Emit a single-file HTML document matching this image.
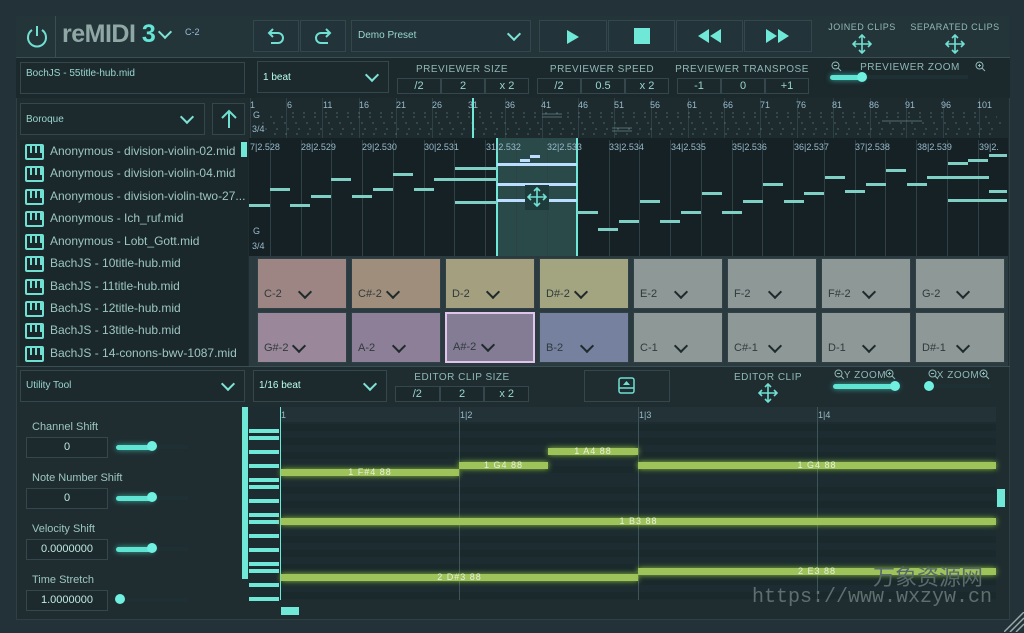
<!DOCTYPE html>
<html><head><meta charset="utf-8"><style>
*{box-sizing:border-box;margin:0;padding:0}
body{width:1024px;height:633px;background:#233238;font-family:"Liberation Sans",sans-serif;color:#8ccfc6;position:relative;overflow:hidden;font-size:11px}
.a{position:absolute}
.box{position:absolute;border:1px solid #34474c;background:#1c2a2e}
.t{position:absolute;white-space:nowrap}
.lbl{position:absolute;font-size:10px;color:#8fb9b6;letter-spacing:.5px;white-space:nowrap;transform:translateX(-50%)}
.btns{position:absolute;display:flex;height:16px}
.btns div{flex:1;border:1px solid #34474c;background:#1b292d;text-align:center;font-size:11px;line-height:14px;color:#9ad6ce}
.chev{position:absolute;width:10px;height:10px;border-right:2px solid #7ee3d6;border-bottom:2px solid #7ee3d6;transform:rotate(45deg)}
.pad{position:absolute;width:90px;height:51px;border:1px solid #2f4146}
.pad span{position:absolute;left:6px;bottom:8px;font-size:11px;color:#2f3a3c}
.pad i{position:absolute;left:42px;bottom:11px;width:10px;height:10px;border-right:2px solid #1f2a2c;border-bottom:2px solid #1f2a2c;transform:rotate(45deg)}
.fi{position:absolute;left:24px;height:20px;font-size:12px;color:#9cc6c1}
.fi b{position:absolute;left:1px;top:2px;width:19px;height:16px;border:2px solid #6fe0d2;border-radius:2px}
.fi b:before{content:"";position:absolute;left:3px;top:0;width:2px;height:7px;background:#6fe0d2;box-shadow:5px 0 #6fe0d2,10px 0 #6fe0d2}
.fi span{position:absolute;left:26px;top:2px;white-space:nowrap}
.pn{position:absolute;height:3px;background:#7fcfc5}
.vl{position:absolute;width:1px;background:#2e4145}
.ctl{position:absolute;left:32px;font-size:11px;color:#9cc6c1}
.vbox{position:absolute;left:26px;width:82px;height:21px;border:1px solid #34474c;background:#1c2a2e;text-align:center;line-height:19px;font-size:11px;color:#bfe9e3}
.sl{position:absolute;height:5px;border-radius:3px;background:#5fe3d3;box-shadow:0 0 6px #3fa89c}
.knob{position:absolute;width:12px;height:12px;border-radius:6px;background:#6ff0e0}
.note{position:absolute;height:7px;background:#9ec35a;box-shadow:0 0 6px #8fbf3f;font-size:9px;color:#e8f0d8;text-align:center;line-height:7px;letter-spacing:1px}
.key{position:absolute;left:249px;width:30px;height:4px;background:#6fe8d8}
.row{position:absolute;left:280px;width:716px;height:7px;background:#1a2a2c}
.mag{position:absolute}
</style></head><body>
<div class="a" style="left:16px;top:16px;width:994px;height:604px;background:#1f2d31;border:1px solid #2f4044"></div>
<div class="a" style="left:16px;top:16px;width:994px;height:42px;background:#24353a;border-bottom:1px solid #3a4f53"></div>
<div class="a" style="left:16px;top:16px;width:40px;height:42px;border-right:1px solid #3a4f53"></div>
<svg class="a" style="left:24px;top:24px" width="26" height="26" viewBox="0 0 26 26"><path d="M8 6 A9 9 0 1 0 18 6" fill="none" stroke="#6fe0d2" stroke-width="2"/><line x1="13" y1="2" x2="13" y2="12" stroke="#6fe0d2" stroke-width="2"/></svg>
<div class="t" style="left:62px;top:20px;font-size:25px;font-weight:bold;color:#8fa8a6;letter-spacing:-0.5px">reMIDI <span style="color:#63e6d6">3</span></div>
<div class="chev" style="left:160px;top:27px"></div>
<div class="t" style="left:185px;top:27px;font-size:9px;color:#9bd">C-2</div>
<div class="box" style="left:253px;top:20px;width:46px;height:32px;background:#22333a"></div>
<div class="box" style="left:300px;top:20px;width:46px;height:32px;background:#22333a"></div>
<svg class="a" style="left:266px;top:27px" width="20" height="18"><path d="M4 6 H12 A5 5 0 0 1 12 16 H5 M7 2 L3 6 L7 10" fill="none" stroke="#6fe0d2" stroke-width="2"/></svg>
<svg class="a" style="left:313px;top:27px" width="20" height="18"><path d="M16 6 H8 A5 5 0 0 0 8 16 H15 M13 2 L17 6 L13 10" fill="none" stroke="#6fe0d2" stroke-width="2"/></svg>
<div class="box" style="left:351px;top:20px;width:180px;height:32px;background:#22333a"></div>
<div class="t" style="left:358px;top:30px;font-size:10px;color:#9ad6ce">Demo Preset</div>
<div class="chev" style="left:509px;top:29px"></div>
<div class="box" style="left:539px;top:20px;width:68px;height:32px;background:#22333a"></div>
<div class="box" style="left:608px;top:20px;width:67px;height:32px;background:#22333a"></div>
<div class="box" style="left:676px;top:20px;width:67px;height:32px;background:#22333a"></div>
<div class="box" style="left:744px;top:20px;width:68px;height:32px;background:#22333a"></div>
<svg class="a" style="left:566px;top:29px" width="14" height="16"><path d="M1 1 L13 8 L1 15Z" fill="#6fe8d8"/></svg>
<div class="a" style="left:634px;top:28px;width:16px;height:16px;background:#6fe8d8"></div>
<svg class="a" style="left:698px;top:29px" width="24" height="14"><path d="M11 0 L0 7 L11 14Z M23 0 L12 7 L23 14Z" fill="#6fe8d8"/></svg>
<svg class="a" style="left:766px;top:29px" width="24" height="14"><path d="M0 0 L11 7 L0 14Z M12 0 L23 7 L12 14Z" fill="#6fe8d8"/></svg>
<div class="lbl" style="left:862px;top:22px;font-size:9px">JOINED CLIPS</div>
<div class="lbl" style="left:955px;top:22px;font-size:9px">SEPARATED CLIPS</div>
<svg class="a" style="left:852px;top:34px" width="20" height="20" viewBox="0 0 20 20"><path d="M10 1V19M1 10H19M7 4L10 1L13 4M7 16L10 19L13 16M4 7L1 10L4 13M16 7L19 10L16 13" fill="none" stroke="#6fe0d2" stroke-width="1.6"/></svg>
<svg class="a" style="left:945px;top:34px" width="20" height="20" viewBox="0 0 20 20"><path d="M10 1V19M1 10H19M7 4L10 1L13 4M7 16L10 19L13 16M4 7L1 10L4 13M16 7L19 10L16 13" fill="none" stroke="#6fe0d2" stroke-width="1.6"/></svg>
<div class="a" style="left:16px;top:58px;width:994px;height:40px;background:#1b282c"></div>
<div class="box" style="left:20px;top:62px;width:225px;height:32px"></div>
<div class="t" style="left:26px;top:68px;font-size:10px;color:#9ad6ce">BochJS - 55title-hub.mid</div>
<div class="box" style="left:257px;top:61px;width:132px;height:32px"></div>
<div class="t" style="left:263px;top:72px;font-size:10px;color:#bfe">1 beat</div>
<div class="chev" style="left:367px;top:70px"></div>
<div class="lbl" style="left:462px;top:64px">PREVIEWER SIZE</div>
<div class="btns" style="left:397px;top:78px;width:132px"><div>/2</div><div>2</div><div>x 2</div></div>
<div class="lbl" style="left:602px;top:64px">PREVIEWER SPEED</div>
<div class="btns" style="left:537px;top:78px;width:132px"><div>/2</div><div>0.5</div><div>x 2</div></div>
<div class="lbl" style="left:742px;top:64px">PREVIEWER TRANSPOSE</div>
<div class="btns" style="left:677px;top:78px;width:132px"><div>-1</div><div>0</div><div>+1</div></div>
<div class="lbl" style="left:910px;top:62px">PREVIEWER ZOOM</div>
<svg class="mag" style="left:831px;top:61px" width="11" height="11"><circle cx="4.5" cy="4.5" r="3.5" fill="none" stroke="#8fb9b6"/><path d="M7 7L10 10M3 4.5H6" stroke="#8fb9b6"/></svg>
<svg class="mag" style="left:975px;top:61px" width="11" height="11"><circle cx="4.5" cy="4.5" r="3.5" fill="none" stroke="#8fb9b6"/><path d="M7 7L10 10M3 4.5H6M4.5 3V6" stroke="#8fb9b6"/></svg>
<div class="a" style="left:830px;top:75px;width:138px;height:4px;background:#1f3034"></div>
<div class="sl" style="left:830px;top:75px;width:34px"></div>
<div class="knob" style="left:857px;top:72px;width:10px;height:10px"></div>
<div class="box" style="left:20px;top:103px;width:185px;height:32px"></div>
<div class="t" style="left:26px;top:114px;font-size:10px;color:#9ad6ce">Boroque</div>
<div class="chev" style="left:182px;top:112px"></div>
<div class="box" style="left:212px;top:103px;width:33px;height:32px"></div>
<svg class="a" style="left:219px;top:109px" width="20" height="20"><path d="M10 19V2M3 9L10 2L17 9" fill="none" stroke="#6fe0d2" stroke-width="2"/></svg>
<div class="a" style="left:20px;top:140px;width:228px;height:226px;background:#1a272b"></div>
<div class="a" style="left:241px;top:142px;width:6px;height:15px;background:#6fe8d8"></div>
<div class="fi" style="top:142px"><b></b><span>Anonymous - division-violin-02.mid</span></div>
<div class="fi" style="top:164px"><b></b><span>Anonymous - division-violin-04.mid</span></div>
<div class="fi" style="top:187px"><b></b><span>Anonymous - division-violin-two-27...</span></div>
<div class="fi" style="top:209px"><b></b><span>Anonymous - Ich_ruf.mid</span></div>
<div class="fi" style="top:232px"><b></b><span>Anonymous - Lobt_Gott.mid</span></div>
<div class="fi" style="top:254px"><b></b><span>BachJS - 10title-hub.mid</span></div>
<div class="fi" style="top:277px"><b></b><span>BachJS - 11title-hub.mid</span></div>
<div class="fi" style="top:299px"><b></b><span>BachJS - 12title-hub.mid</span></div>
<div class="fi" style="top:321px"><b></b><span>BachJS - 13title-hub.mid</span></div>
<div class="fi" style="top:344px"><b></b><span>BachJS - 14-conons-bwv-1087.mid</span></div>
<div class="a" style="left:249px;top:98px;width:759px;height:40px;background:#1d2b2f"></div>
<div class="vl" style="left:250px;top:98px;height:40px"></div><div class="vl" style="left:286px;top:98px;height:40px"></div><div class="vl" style="left:322px;top:98px;height:40px"></div><div class="vl" style="left:359px;top:98px;height:40px"></div><div class="vl" style="left:396px;top:98px;height:40px"></div><div class="vl" style="left:432px;top:98px;height:40px"></div><div class="vl" style="left:505px;top:98px;height:40px"></div><div class="vl" style="left:542px;top:98px;height:40px"></div><div class="vl" style="left:578px;top:98px;height:40px"></div><div class="vl" style="left:614px;top:98px;height:40px"></div><div class="vl" style="left:651px;top:98px;height:40px"></div><div class="vl" style="left:688px;top:98px;height:40px"></div><div class="vl" style="left:724px;top:98px;height:40px"></div><div class="vl" style="left:760px;top:98px;height:40px"></div><div class="vl" style="left:797px;top:98px;height:40px"></div><div class="vl" style="left:833px;top:98px;height:40px"></div><div class="vl" style="left:870px;top:98px;height:40px"></div><div class="vl" style="left:906px;top:98px;height:40px"></div><div class="vl" style="left:943px;top:98px;height:40px"></div><div class="vl" style="left:979px;top:98px;height:40px"></div>
<div class="t" style="left:250px;top:100px;font-size:9px;color:#9bc">1</div>
<div class="t" style="left:287px;top:100px;font-size:9px;color:#9bc">6</div><div class="t" style="left:323px;top:100px;font-size:9px;color:#9bc">11</div><div class="t" style="left:359px;top:100px;font-size:9px;color:#9bc">16</div><div class="t" style="left:396px;top:100px;font-size:9px;color:#9bc">21</div><div class="t" style="left:432px;top:100px;font-size:9px;color:#9bc">26</div><div class="t" style="left:468px;top:100px;font-size:9px;color:#9bc">31</div><div class="t" style="left:505px;top:100px;font-size:9px;color:#9bc">36</div><div class="t" style="left:541px;top:100px;font-size:9px;color:#9bc">41</div><div class="t" style="left:578px;top:100px;font-size:9px;color:#9bc">46</div><div class="t" style="left:614px;top:100px;font-size:9px;color:#9bc">51</div><div class="t" style="left:650px;top:100px;font-size:9px;color:#9bc">56</div><div class="t" style="left:687px;top:100px;font-size:9px;color:#9bc">61</div><div class="t" style="left:723px;top:100px;font-size:9px;color:#9bc">66</div><div class="t" style="left:760px;top:100px;font-size:9px;color:#9bc">71</div><div class="t" style="left:796px;top:100px;font-size:9px;color:#9bc">76</div><div class="t" style="left:832px;top:100px;font-size:9px;color:#9bc">81</div><div class="t" style="left:869px;top:100px;font-size:9px;color:#9bc">86</div><div class="t" style="left:905px;top:100px;font-size:9px;color:#9bc">91</div><div class="t" style="left:941px;top:100px;font-size:9px;color:#9bc">96</div><div class="t" style="left:977px;top:100px;font-size:9px;color:#9bc">101</div>
<div class="t" style="left:253px;top:110px;font-size:9px;color:#9bc">G</div>
<div class="t" style="left:252px;top:124px;font-size:9px;color:#9bc">3/4</div>
<svg class="a" style="left:262px;top:108px" width="745" height="28" opacity="0.6"><g stroke="#6c8e8c" stroke-width="1" stroke-dasharray="2 9"><path d="M0 15H740M8 9H735M3 21H740M12 26H730M30 5H720"/></g><path d="M280 6H300M280 9H300M350 20H370M350 23H370M620 13H660M940 12H960" stroke="#7a9c9a"/></svg>
<div class="a" style="left:472px;top:98px;width:2px;height:40px;background:#6fe8d8"></div>
<div class="a" style="left:249px;top:138px;width:759px;height:118px;background:#152124"></div>
<div class="a" style="left:497px;top:138px;width:80px;height:118px;background:#2a4a4a"></div>
<div class="a" style="left:496px;top:138px;width:2px;height:118px;background:#6fe8d8"></div>
<div class="a" style="left:576px;top:138px;width:2px;height:118px;background:#6fe8d8"></div>
<div class="a" style="left:241px;top:142px;width:6px;height:15px;background:#6fe8d8"></div>
<div class="vl" style="left:270px;top:140px;height:116px"></div><div class="vl" style="left:301px;top:140px;height:116px"></div><div class="vl" style="left:331px;top:140px;height:116px"></div><div class="vl" style="left:362px;top:140px;height:116px"></div><div class="vl" style="left:393px;top:140px;height:116px"></div><div class="vl" style="left:424px;top:140px;height:116px"></div><div class="vl" style="left:454px;top:140px;height:116px"></div><div class="vl" style="left:485px;top:140px;height:116px"></div><div class="vl" style="left:516px;top:140px;height:116px"></div><div class="vl" style="left:547px;top:140px;height:116px"></div><div class="vl" style="left:609px;top:140px;height:116px"></div><div class="vl" style="left:639px;top:140px;height:116px"></div><div class="vl" style="left:670px;top:140px;height:116px"></div><div class="vl" style="left:701px;top:140px;height:116px"></div><div class="vl" style="left:732px;top:140px;height:116px"></div><div class="vl" style="left:762px;top:140px;height:116px"></div><div class="vl" style="left:793px;top:140px;height:116px"></div><div class="vl" style="left:824px;top:140px;height:116px"></div><div class="vl" style="left:855px;top:140px;height:116px"></div><div class="vl" style="left:885px;top:140px;height:116px"></div><div class="vl" style="left:916px;top:140px;height:116px"></div><div class="vl" style="left:947px;top:140px;height:116px"></div><div class="vl" style="left:978px;top:140px;height:116px"></div>
<div class="t" style="left:250px;top:142px;font-size:9px;color:#9bc">7|2.528</div>
<div class="t" style="left:301px;top:142px;font-size:9px;color:#9bc">28|2.529</div><div class="t" style="left:362px;top:142px;font-size:9px;color:#9bc">29|2.530</div><div class="t" style="left:424px;top:142px;font-size:9px;color:#9bc">30|2.531</div><div class="t" style="left:486px;top:142px;font-size:9px;color:#9bc">31|2.532</div><div class="t" style="left:547px;top:142px;font-size:9px;color:#9bc">32|2.533</div><div class="t" style="left:609px;top:142px;font-size:9px;color:#9bc">33|2.534</div><div class="t" style="left:671px;top:142px;font-size:9px;color:#9bc">34|2.535</div><div class="t" style="left:732px;top:142px;font-size:9px;color:#9bc">35|2.536</div><div class="t" style="left:794px;top:142px;font-size:9px;color:#9bc">36|2.537</div><div class="t" style="left:855px;top:142px;font-size:9px;color:#9bc">37|2.538</div><div class="t" style="left:917px;top:142px;font-size:9px;color:#9bc">38|2.539</div><div class="t" style="left:979px;top:142px;font-size:9px;color:#9bc">39|2.</div>
<div class="t" style="left:253px;top:226px;font-size:9px;color:#9bc">G</div>
<div class="t" style="left:252px;top:241px;font-size:9px;color:#9bc">3/4</div>
<div class="pn" style="left:249px;top:204px;width:21px"></div><div class="pn" style="left:270px;top:188px;width:20px"></div><div class="pn" style="left:290px;top:204px;width:20px"></div><div class="pn" style="left:311px;top:195px;width:20px"></div><div class="pn" style="left:331px;top:178px;width:20px"></div><div class="pn" style="left:352px;top:195px;width:20px"></div><div class="pn" style="left:373px;top:188px;width:20px"></div><div class="pn" style="left:393px;top:173px;width:20px"></div><div class="pn" style="left:414px;top:188px;width:20px"></div><div class="pn" style="left:434px;top:178px;width:63px"></div><div class="pn" style="left:455px;top:167px;width:42px"></div><div class="pn" style="left:455px;top:201px;width:42px"></div>
<div class="pn" style="left:497px;top:163px;width:80px;background:#bdf"></div><div class="pn" style="left:497px;top:183px;width:80px;background:#bdf"></div><div class="pn" style="left:497px;top:199px;width:80px;background:#bdf"></div><div class="pn" style="left:520px;top:159px;width:10px;background:#bdf"></div><div class="pn" style="left:530px;top:155px;width:10px;background:#bdf"></div>
<div class="a" style="left:525px;top:185px;width:24px;height:25px;background:#1f3a3a"></div>
<svg class="a" style="left:527px;top:187px" width="20" height="20" viewBox="0 0 20 20"><path d="M10 1V19M1 10H19M7 4L10 1L13 4M7 16L10 19L13 16M4 7L1 10L4 13M16 7L19 10L16 13" fill="none" stroke="#6fe0d2" stroke-width="1.6"/></svg>
<div class="pn" style="left:577px;top:211px;width:21px"></div><div class="pn" style="left:598px;top:228px;width:20px"></div><div class="pn" style="left:619px;top:220px;width:20px"></div><div class="pn" style="left:640px;top:200px;width:20px"></div><div class="pn" style="left:660px;top:220px;width:20px"></div><div class="pn" style="left:681px;top:211px;width:20px"></div><div class="pn" style="left:702px;top:192px;width:20px"></div><div class="pn" style="left:722px;top:211px;width:20px"></div><div class="pn" style="left:743px;top:200px;width:20px"></div><div class="pn" style="left:763px;top:183px;width:20px"></div><div class="pn" style="left:784px;top:200px;width:20px"></div><div class="pn" style="left:804px;top:192px;width:20px"></div><div class="pn" style="left:825px;top:176px;width:20px"></div><div class="pn" style="left:845px;top:190px;width:20px"></div><div class="pn" style="left:866px;top:183px;width:20px"></div><div class="pn" style="left:886px;top:169px;width:20px"></div><div class="pn" style="left:907px;top:183px;width:20px"></div><div class="pn" style="left:927px;top:176px;width:62px"></div><div class="pn" style="left:948px;top:162px;width:20px"></div><div class="pn" style="left:968px;top:159px;width:20px"></div><div class="pn" style="left:989px;top:154px;width:18px"></div><div class="pn" style="left:948px;top:199px;width:59px"></div><div class="pn" style="left:989px;top:190px;width:18px"></div>
<div class="a" style="left:249px;top:256px;width:759px;height:110px;background:#2a3a3e"></div>
<div class="pad" style="left:257px;top:258px;background:#9c8582"><span>C-2</span><i></i></div>
<div class="pad" style="left:351px;top:258px;background:#a08e7c"><span>C#-2</span><i style="left:36px"></i></div>
<div class="pad" style="left:445px;top:258px;background:#a49f7e"><span>D-2</span><i></i></div>
<div class="pad" style="left:539px;top:258px;background:#a3a580"><span>D#-2</span><i style="left:36px"></i></div>
<div class="pad" style="left:633px;top:258px;background:#8e9896"><span>E-2</span><i></i></div>
<div class="pad" style="left:727px;top:258px;background:#8e9896"><span>F-2</span><i></i></div>
<div class="pad" style="left:821px;top:258px;background:#8e9896"><span>F#-2</span><i></i></div>
<div class="pad" style="left:915px;top:258px;background:#8e9896"><span>G-2</span><i></i></div>
<div class="pad" style="left:257px;top:312px;background:#9a889a"><span>G#-2</span><i style="left:36px"></i></div>
<div class="pad" style="left:351px;top:312px;background:#8d7f97"><span>A-2</span><i></i></div>
<div class="pad" style="left:445px;top:312px;background:#847b95;border:2px solid #e0c4ec"><span>A#-2</span><i style="left:36px"></i></div>
<div class="pad" style="left:539px;top:312px;background:#7681a0"><span>B-2</span><i></i></div>
<div class="pad" style="left:633px;top:312px;background:#8e9896"><span>C-1</span><i></i></div>
<div class="pad" style="left:727px;top:312px;background:#8e9896"><span>C#-1</span><i></i></div>
<div class="pad" style="left:821px;top:312px;background:#8e9896"><span>D-1</span><i></i></div>
<div class="pad" style="left:915px;top:312px;background:#8e9896"><span>D#-1</span><i></i></div>
<div class="a" style="left:16px;top:366px;width:994px;height:1px;background:#3a4f53"></div>
<div class="box" style="left:20px;top:370px;width:225px;height:32px"></div>
<div class="t" style="left:26px;top:380px;font-size:10px;color:#9ad6ce">Utility Tool</div>
<div class="chev" style="left:223px;top:379px"></div>
<div class="box" style="left:253px;top:370px;width:134px;height:32px"></div>
<div class="t" style="left:259px;top:380px;font-size:10px;color:#bfe">1/16 beat</div>
<div class="chev" style="left:365px;top:379px"></div>
<div class="lbl" style="left:462px;top:372px">EDITOR CLIP SIZE</div>
<div class="btns" style="left:395px;top:386px;width:134px"><div>/2</div><div>2</div><div>x 2</div></div>
<div class="box" style="left:584px;top:370px;width:86px;height:32px;background:#1f2d31"></div>
<svg class="a" style="left:618px;top:377px" width="18" height="18"><rect x="1" y="1" width="15" height="15" rx="2" fill="none" stroke="#6fe0d2" stroke-width="1.5"/><path d="M1 11H16" stroke="#6fe0d2" stroke-width="1.5"/><path d="M5 8L8.5 4L12 8Z" fill="#6fe0d2"/></svg>
<div class="lbl" style="left:768px;top:372px">EDITOR CLIP</div>
<svg class="a" style="left:758px;top:383px" width="20" height="20" viewBox="0 0 20 20"><path d="M10 1V19M1 10H19M7 4L10 1L13 4M7 16L10 19L13 16M4 7L1 10L4 13M16 7L19 10L16 13" fill="none" stroke="#6fe0d2" stroke-width="1.6"/></svg>
<svg class="mag" style="left:834px;top:369px" width="11" height="11"><circle cx="4.5" cy="4.5" r="3.5" fill="none" stroke="#8fb9b6"/><path d="M7 7L10 10M3 4.5H6" stroke="#8fb9b6"/></svg>
<div class="lbl" style="left:865px;top:370px">Y ZOOM</div>
<svg class="mag" style="left:885px;top:369px" width="11" height="11"><circle cx="4.5" cy="4.5" r="3.5" fill="none" stroke="#8fb9b6"/><path d="M7 7L10 10M3 4.5H6M4.5 3V6" stroke="#8fb9b6"/></svg>
<div class="sl" style="left:833px;top:384px;width:66px"></div>
<div class="knob" style="left:890px;top:381px;width:10px;height:10px"></div>
<svg class="mag" style="left:928px;top:369px" width="11" height="11"><circle cx="4.5" cy="4.5" r="3.5" fill="none" stroke="#8fb9b6"/><path d="M7 7L10 10M3 4.5H6" stroke="#8fb9b6"/></svg>
<div class="lbl" style="left:958px;top:370px">X ZOOM</div>
<svg class="mag" style="left:979px;top:369px" width="11" height="11"><circle cx="4.5" cy="4.5" r="3.5" fill="none" stroke="#8fb9b6"/><path d="M7 7L10 10M3 4.5H6M4.5 3V6" stroke="#8fb9b6"/></svg>
<div class="a" style="left:925px;top:384px;width:66px;height:4px;background:#1f3034"></div>
<div class="knob" style="left:924px;top:381px;width:10px;height:10px"></div>
<div class="ctl" style="top:421px">Channel Shift</div>
<div class="vbox" style="top:437px">0</div>
<div class="a" style="left:116px;top:445px;width:72px;height:4px;background:#1f3034"></div><div class="sl" style="left:116px;top:445px;width:38px"></div><div class="knob" style="left:147px;top:441px;width:10px;height:10px"></div>
<div class="ctl" style="top:472px">Note Number Shift</div>
<div class="vbox" style="top:488px">0</div>
<div class="a" style="left:116px;top:496px;width:72px;height:4px;background:#1f3034"></div><div class="sl" style="left:116px;top:496px;width:38px"></div><div class="knob" style="left:147px;top:492px;width:10px;height:10px"></div>
<div class="ctl" style="top:523px">Velocity Shift</div>
<div class="vbox" style="top:539px">0.0000000</div>
<div class="a" style="left:116px;top:547px;width:72px;height:4px;background:#1f3034"></div><div class="sl" style="left:116px;top:547px;width:38px"></div><div class="knob" style="left:147px;top:543px;width:10px;height:10px"></div>
<div class="ctl" style="top:574px">Time Stretch</div>
<div class="vbox" style="top:590px">1.0000000</div>
<div class="a" style="left:116px;top:598px;width:72px;height:4px;background:#1f3034"></div><div class="knob" style="left:115px;top:594px;width:10px;height:10px"></div>
<div class="a" style="left:242px;top:407px;width:6px;height:172px;background:#6fe8d8"></div>
<div class="a" style="left:249px;top:407px;width:747px;height:193px;background:#1d2c30"></div>
<div class="a" style="left:280px;top:407px;width:716px;height:15px;background:#223236"></div>
<div class="row" style="top:424px"></div><div class="row" style="top:438px"></div><div class="row" style="top:452px"></div><div class="row" style="top:466px"></div><div class="row" style="top:487px"></div><div class="row" style="top:501px"></div><div class="row" style="top:515px"></div><div class="row" style="top:536px"></div><div class="row" style="top:550px"></div><div class="row" style="top:564px"></div><div class="row" style="top:578px"></div><div class="row" style="top:592px"></div>
<div class="key" style="top:429px"></div><div class="key" style="top:436px"></div><div class="key" style="top:450px"></div><div class="key" style="top:464px"></div><div class="key" style="top:478px"></div><div class="key" style="top:485px"></div><div class="key" style="top:499px"></div><div class="key" style="top:513px"></div><div class="key" style="top:520px"></div><div class="key" style="top:534px"></div><div class="key" style="top:548px"></div><div class="key" style="top:562px"></div><div class="key" style="top:569px"></div><div class="key" style="top:583px"></div><div class="key" style="top:597px"></div>
<div class="a" style="left:280px;top:407px;width:1px;height:193px;background:#6fe8d8"></div>
<div class="vl" style="left:459px;top:407px;height:193px;background:#3f5458"></div>
<div class="vl" style="left:638px;top:407px;height:193px;background:#3f5458"></div>
<div class="vl" style="left:817px;top:407px;height:193px;background:#3f5458"></div>
<div class="t" style="left:281px;top:410px;font-size:9px;color:#9bc">1</div>
<div class="t" style="left:460px;top:410px;font-size:9px;color:#9bc">1|2</div>
<div class="t" style="left:639px;top:410px;font-size:9px;color:#9bc">1|3</div>
<div class="t" style="left:818px;top:410px;font-size:9px;color:#9bc">1|4</div>
<div class="note" style="left:281px;top:469px;width:178px">1 F#4 88</div>
<div class="note" style="left:459px;top:462px;width:89px">1 G4 88</div>
<div class="note" style="left:548px;top:448px;width:90px">1 A4 88</div>
<div class="note" style="left:638px;top:462px;width:358px">1 G4 88</div>
<div class="note" style="left:281px;top:518px;width:715px">1 B3 88</div>
<div class="note" style="left:281px;top:574px;width:357px">2 D#3 88</div>
<div class="note" style="left:638px;top:568px;width:358px">2 E3 88</div>
<div class="a" style="left:997px;top:489px;width:8px;height:18px;background:#6fe8d8"></div>
<div class="a" style="left:281px;top:607px;width:18px;height:8px;background:#6fe8d8"></div>
<div class="t" style="left:873px;top:560px;font-size:22px;color:#5a6a6c;font-family:'Noto Sans CJK SC',sans-serif">万象资源网</div>
<div class="t" style="left:752px;top:586px;font-size:20px;color:#5f6f70;font-family:'Liberation Mono',monospace">https://www.wxzyw.cn</div>
<svg class="a" style="left:1004px;top:612px" width="20" height="20"><path d="M0 20L20 0M6 20L20 6M12 20L20 12" stroke="#9aa" stroke-width="1.5"/></svg>
</body></html>
